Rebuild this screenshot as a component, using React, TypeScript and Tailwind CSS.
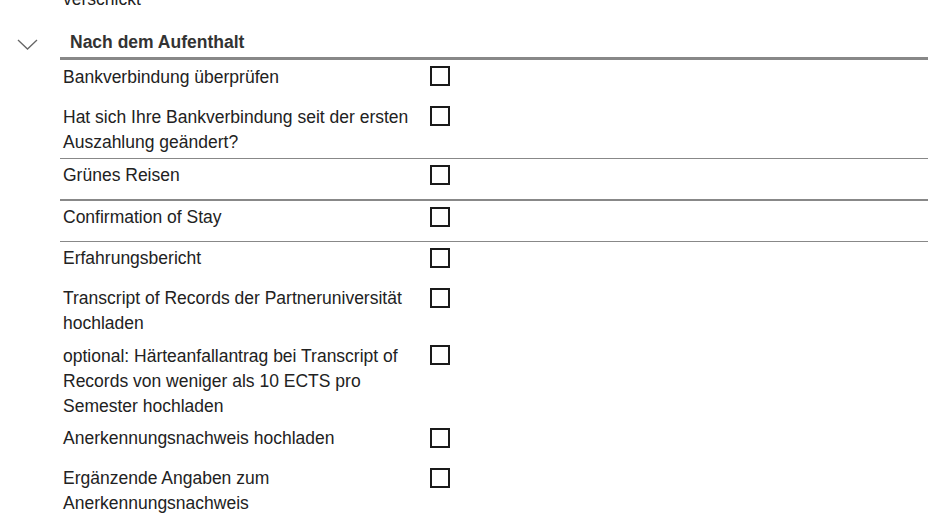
import React from "react";

type Item = {
  label: string;
  border?: "thin" | "thick";
};

const ITEMS: Item[] = [
  { label: "Bankverbindung überprüfen" },
  { label: "Hat sich Ihre Bankverbindung seit der ersten Auszahlung geändert?", border: "thin" },
  { label: "Grünes Reisen", border: "thick" },
  { label: "Confirmation of Stay", border: "thin" },
  { label: "Erfahrungsbericht" },
  { label: "Transcript of Records der Partneruniversität hochladen" },
  { label: "optional: Härteanfallantrag bei Transcript of Records von weniger als 10 ECTS pro Semester hochladen" },
  { label: "Anerkennungsnachweis hochladen" },
  { label: "Ergänzende Angaben zum Anerkennungsnachweis" },
];

function Chevron() {
  return (
    <svg width="21" height="11" viewBox="0 0 21 11" fill="none">
      <polyline points="1,1 10.5,10 20,1" stroke="#666" strokeWidth="1.3" />
    </svg>
  );
}

function ChecklistRow({ item }: { item: Item }) {
  const borderClass =
    item.border === "thick"
      ? "border-b-2 border-[#888]"
      : item.border === "thin"
        ? "border-b border-[#888]"
        : "";
  return (
    <div className={`flex items-start ${borderClass}`}>
      <div className="w-[364px] shrink-0 px-[3px] pt-[4.5px] pb-[3px] leading-[25px] text-[#222]">
        {item.label}
      </div>
      <div className="h-[40px] pl-[6px] pt-[6px]">
        <span className="block w-[20px] h-[20px] border-2 border-[#1a1a1a] bg-white" />
      </div>
    </div>
  );
}

export default function App() {
  return (
    <div
      className="w-[928px] h-[522px] overflow-hidden bg-white text-[17.5px]"
      style={{ fontFamily: '"Liberation Sans", Arial, sans-serif' }}
    >
      {/* tail of the previous section */}
      <div className="pl-[63px] -mt-[13px] leading-[25px] text-[#222]">verschickt</div>

      <div className="flex">
        <div className="w-[60px] shrink-0 pl-[17px] pt-[27px]">
          <Chevron />
        </div>
        <div className="flex-1">
          <div className="pt-[17.5px] pb-[2.5px] pl-[10px] leading-[25px] font-bold text-[#333] border-b-[3px] border-[#888]">
            Nach dem Aufenthalt
          </div>
          {ITEMS.map((item, i) => (
            <ChecklistRow key={i} item={item} />
          ))}
        </div>
      </div>
    </div>
  );
}
